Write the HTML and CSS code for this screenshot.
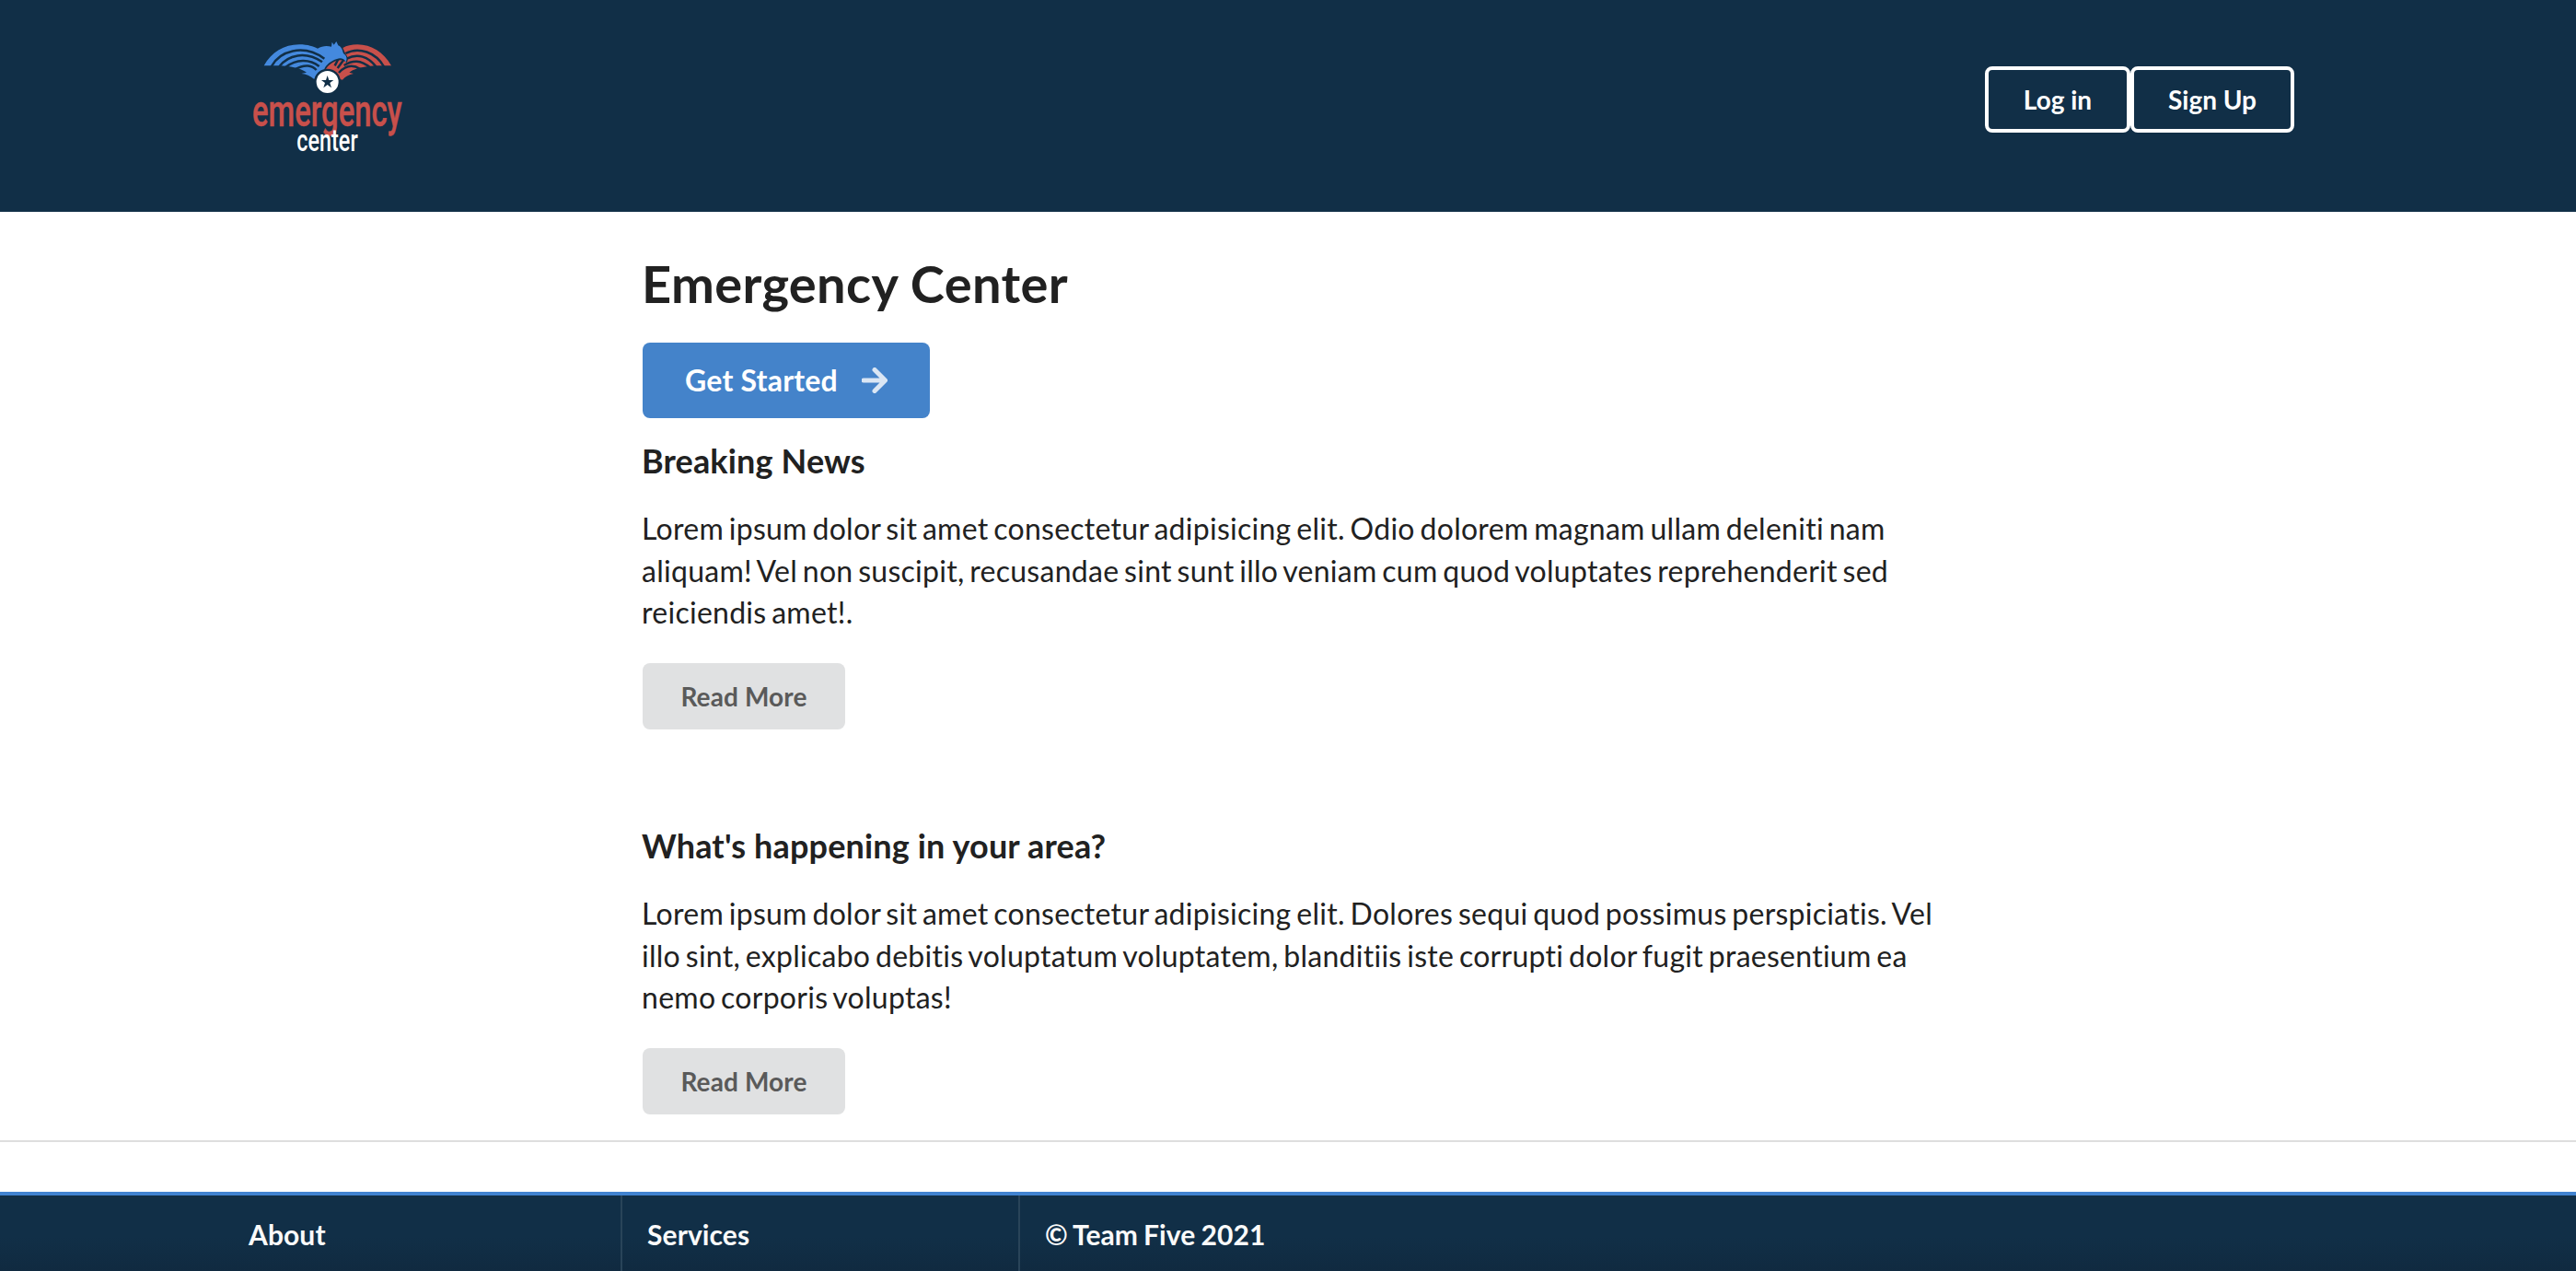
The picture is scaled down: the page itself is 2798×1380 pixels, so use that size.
FILE: index.html
```html
<!DOCTYPE html>
<html lang="en">
<head>
<meta charset="utf-8">
<title>Emergency Center</title>
<link rel="stylesheet" href="styles.css">
</head>
<body>
<header class="site-header">
  <a class="logo" aria-label="Emergency Center">
    <svg class="logo-art" viewBox="0 0 570 450">
      <!-- red wing -->
      <path class="red" d="M495 124C470 80 430 55 385 55C365 55 350 59 337 66L346 86C354 94 356 106 349 114C340 102 318 104 300 116C290 123 284 130 280 138C298 134 318 142 328 168L336 170C345 160 356 153 372 150L358 146C372 136 390 130 416 127L440 124Z"/>
      <path class="gap" d="M471 127C445 82 390 60 346 84M445 127C420 94 385 83 350 101M426 130C395 105 370 105 341 123M394 135C368 118 345 124 324 147M324 99L311 124M342 102L320 132"/>
      <!-- blue wing, body and head -->
      <path class="blue" d="M80 124C105 80 145 55 195 55C225 55 240 62 255 68C270 59 285 58 300 62L302 47L308 56L316 45L322 58C335 64 336 76 339 84C350 92 352 100 347 112C342 101 330 97 318 102C298 108 282 121 276 137C261 139 250 149 244 168C230 157 218 151 202 150L219 146C205 136 188 130 158 126L135 124Z"/>
      <path class="gap" d="M104 127C130 78 206 50 277 101M130 127C158 89 215 75 270 112M150 129C186 102 228 101 260 126M182 136C214 117 238 124 251 138"/>
      <circle class="gap-fill" cx="287" cy="177" r="43"/>
      <circle class="white" cx="287" cy="177" r="36"/>
      <path class="gap-fill" d="M287 156L292 171H307L295 180L300 196L287 186L274 196L279 180L267 171H282Z"/>
      <text class="logo-word red" x="42" y="321" textLength="488" lengthAdjust="spacingAndGlyphs">emergency</text>
      <text class="logo-sub white" x="187" y="401" textLength="199" lengthAdjust="spacingAndGlyphs">center</text>
    </svg>
  </a>
  <nav class="auth">
    <a class="button outline login">Log in</a>
    <a class="button outline signup">Sign Up</a>
  </nav>
</header>

<main class="content">
  <h1>Emergency Center</h1>
  <a class="button primary">Get Started
    <svg class="arrow" viewBox="0 0 28 28"><path d="M2 14H25M14 2.5L25.5 14L14 25.5"/></svg>
  </a>
  <section class="story">
    <h3>Breaking News</h3>
    <p>Lorem ipsum dolor sit amet consectetur adipisicing elit. Odio dolorem magnam ullam deleniti nam aliquam! Vel non suscipit, recusandae sint sunt illo veniam cum quod voluptates reprehenderit sed reiciendis amet!.</p>
    <a class="button grey">Read More</a>
  </section>
  <section class="story">
    <h3>What's happening in your area?</h3>
    <p>Lorem ipsum dolor sit amet consectetur adipisicing elit. Dolores sequi quod possimus perspiciatis. Vel illo sint, explicabo debitis voluptatum voluptatem, blanditiis iste corrupti dolor fugit praesentium ea nemo corporis voluptas!</p>
    <a class="button grey">Read More</a>
  </section>
</main>

<footer class="site-footer">
  <div class="footer-item">About</div>
  <div class="footer-item">Services</div>
  <div class="footer-item">© Team Five 2021</div>
</footer>
</body>
</html>
```
FILE: styles.css
```css
* { box-sizing: border-box; }

body {
  margin: 0;
  height: 1380px;
  overflow: hidden;
  display: flex;
  flex-direction: column;
  background: #fff;
  color: #212121;
  font: 32px/45.71px Lato, "Liberation Sans", sans-serif;
  font-variant-ligatures: none;
}

.site-header {
  flex: none;
  height: 230px;
  padding: 30px 306px 0 260px;
  display: flex;
  justify-content: space-between;
  align-items: flex-start;
  background: #112f47;
}

.logo, .logo-art { display: block; width: 190px; height: 150px; overflow: visible; }
.red { fill: #c8504b; }
.blue { fill: #4489de; }
.white { fill: #fff; }
.gap { fill: none; stroke: #112f47; stroke-width: 7.5; }
.gap-fill { fill: #112f47; }
.logo-word { font: 500 146px Roboto, sans-serif; stroke: #c8504b; stroke-width: 1.5; }
.logo-sub { font: 500 100px Roboto, sans-serif; }

.auth { display: flex; padding-top: 42px; }

.button {
  flex: none;
  display: inline-flex;
  align-items: center;
  justify-content: center;
  height: 72px;
  border-radius: 8px;
  font-size: 28px;
  line-height: 28px;
  font-weight: 700;
}
.outline { padding-bottom: 1px; border: 4px solid #fff; color: #fff; }
.login { width: 158px; }
.signup { width: 178px; }
.primary {
  width: 312px;
  height: 82px;
  margin-left: 1px;
  gap: 26px;
  font-size: 32px;
  line-height: 32px;
  letter-spacing: 0.2px;
  background: #4483ca;
  color: #fff;
}
.arrow {
  width: 28px;
  height: 28px;
  fill: none;
  stroke: #dae6f4;
  stroke-width: 5;
  stroke-linecap: round;
  stroke-linejoin: round;
}
.grey {
  width: 220px;
  margin-left: 1px;
  letter-spacing: 0.12px;
  background: #e0e1e2;
  color: #5a5a5a;
}

.content {
  flex: none;
  display: flex;
  flex-direction: column;
  align-items: flex-start;
  height: 1010px;
  padding: 42px 697px 0;
  border-bottom: 2px solid #dedede;
}
h1, h3 { flex: none; }
h1 { margin: 0 0 28px; font-size: 56px; line-height: 72px; letter-spacing: 0.36px; }
h3 { margin: 0 0 28px; font-size: 36px; line-height: 46px; letter-spacing: 0.15px; }
p { margin: 0 0 32px; letter-spacing: 0.27px; word-spacing: -2.7px; }
.story { flex: none; width: 1404px; height: 418px; padding-top: 23px; }
.story p { height: 137px; }

.site-footer {
  flex: none;
  display: flex;
  height: 86px;
  margin-top: 54px;
  padding-left: 244px;
  border-top: 4px solid #4183d0;
  background: linear-gradient(#112f47 55%, #102a40);
}
.footer-item {
  width: 432px;
  padding: 20px 0 0 26px;
  border-right: 2px solid #294459;
  color: #fafafa;
  font-size: 30px;
  font-weight: 700;
  letter-spacing: 0.1px;
  word-spacing: -1.4px;
}
.footer-item + .footer-item { padding-left: 27px; }
.footer-item:last-child { border: 0; }
```
